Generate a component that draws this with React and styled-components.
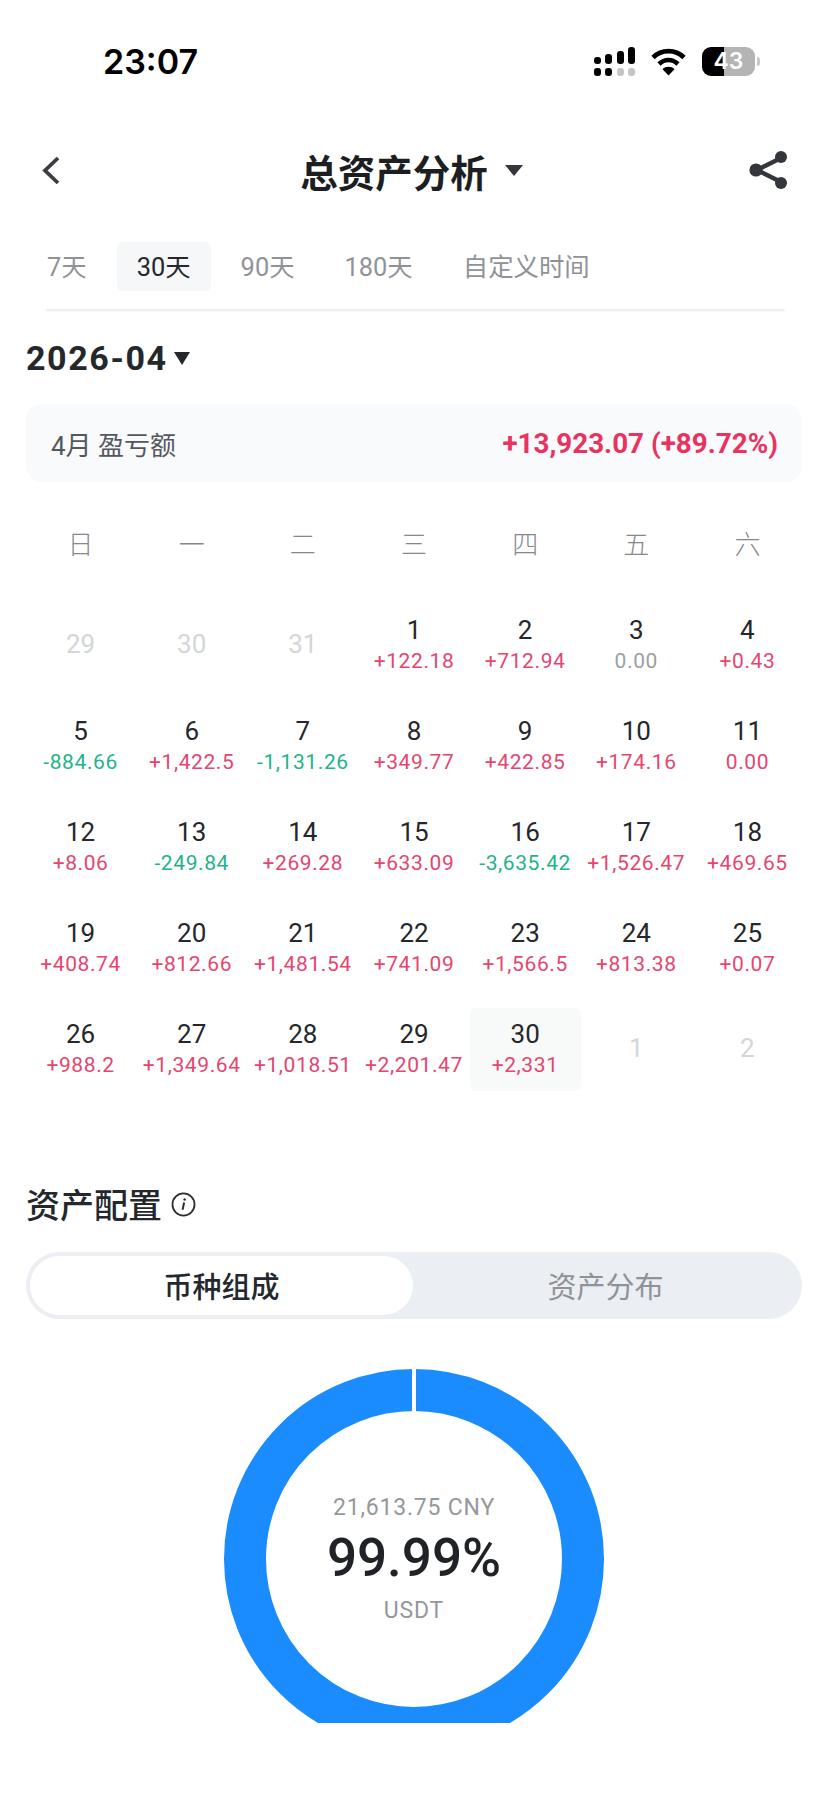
import React from 'react';
import styled, { createGlobalStyle } from 'styled-components';

const GlobalStyle = createGlobalStyle`
  html, body {
    margin: 0;
    padding: 0;
    background: #fff;
    font-family: Roboto, "Noto Sans CJK SC", sans-serif;
    color: #24272c;
  }
`;

const TABS = ['7天', '30天', '90天', '180天', '自定义时间'];
const WEEK = ['日', '一', '二', '三', '四', '五', '六'];

// tone: up / down / flat
const DAYS = [
  { day: 29, faded: true }, { day: 30, faded: true }, { day: 31, faded: true },
  { day: 1, value: '+122.18', tone: 'up' }, { day: 2, value: '+712.94', tone: 'up' },
  { day: 3, value: '0.00', tone: 'flat' }, { day: 4, value: '+0.43', tone: 'up' },
  { day: 5, value: '-884.66', tone: 'down' }, { day: 6, value: '+1,422.5', tone: 'up' },
  { day: 7, value: '-1,131.26', tone: 'down' }, { day: 8, value: '+349.77', tone: 'up' },
  { day: 9, value: '+422.85', tone: 'up' }, { day: 10, value: '+174.16', tone: 'up' },
  { day: 11, value: '0.00', tone: 'up' },
  { day: 12, value: '+8.06', tone: 'up' }, { day: 13, value: '-249.84', tone: 'down' },
  { day: 14, value: '+269.28', tone: 'up' }, { day: 15, value: '+633.09', tone: 'up' },
  { day: 16, value: '-3,635.42', tone: 'down' }, { day: 17, value: '+1,526.47', tone: 'up' },
  { day: 18, value: '+469.65', tone: 'up' },
  { day: 19, value: '+408.74', tone: 'up' }, { day: 20, value: '+812.66', tone: 'up' },
  { day: 21, value: '+1,481.54', tone: 'up' }, { day: 22, value: '+741.09', tone: 'up' },
  { day: 23, value: '+1,566.5', tone: 'up' }, { day: 24, value: '+813.38', tone: 'up' },
  { day: 25, value: '+0.07', tone: 'up' },
  { day: 26, value: '+988.2', tone: 'up' }, { day: 27, value: '+1,349.64', tone: 'up' },
  { day: 28, value: '+1,018.51', tone: 'up' }, { day: 29, value: '+2,201.47', tone: 'up' },
  { day: 30, value: '+2,331', tone: 'up', today: true },
  { day: 1, faded: true }, { day: 2, faded: true },
];

const TONES = { up: '#e5456f', down: '#23b38a', flat: '#9a9fa5' };

const SignalIcon = () => (
  <svg width="42" height="29" viewBox="0 0 42 29" fill="#000">
    <rect x="1" y="10" width="7" height="7" rx="3" />
    <rect x="12" y="7" width="7" height="10" rx="3" />
    <rect x="24" y="4" width="7" height="13" rx="3" />
    <rect x="35" y="0" width="7" height="17" rx="3" />
    <rect x="1" y="21" width="7" height="8" rx="3" />
    <rect x="12" y="21" width="7" height="8" rx="3" />
    <rect x="24" y="21" width="7" height="8" rx="3" fill="#c4c4c4" />
    <rect x="35" y="21" width="7" height="8" rx="3" fill="#c4c4c4" />
  </svg>
);

const WifiIcon = () => (
  <svg width="35" height="28" viewBox="0 0 35 28" fill="none" stroke="#000" strokeWidth="4.6">
    <path d="M2 9.5C10.5 1 24.5 1 33 9.5" />
    <path d="M8 16C13.5 10.6 21.5 10.6 27 16" />
    <path d="M17.5 27.5L11.5 21.2C14.8 18 20.2 18 23.5 21.2Z" fill="#000" stroke="none" />
  </svg>
);

const ShareIcon = () => (
  <svg width="40" height="40" viewBox="0 0 40 40" fill="#33363a" stroke="#33363a">
    <path d="M32 8L8 20L32 32" fill="none" strokeWidth="4.4" />
    <circle cx="32" cy="7" r="6" stroke="none" />
    <circle cx="7" cy="20" r="6.6" stroke="none" />
    <circle cx="32" cy="33" r="6" stroke="none" />
  </svg>
);

const InfoIcon = styled(({ className }) => (
  <svg className={className} width="25" height="25" viewBox="0 0 24 24" fill="none" stroke="#2c2f33" strokeWidth="1.7">
    <circle cx="12" cy="12" r="10.6" />
    <path d="M12.6 10.1L11.1 17.1" strokeWidth="1.9" />
    <circle cx="13.1" cy="7.1" r="1.2" fill="#2c2f33" stroke="none" />
  </svg>
))`
  margin-top: 2px;
`;

const App = () => (
  <Page>
    <GlobalStyle />
    <StatusBar>
      <Clock>23:07</Clock>
      <StatusIcons>
        <SignalIcon />
        <WifiIcon />
        <Battery>
          <BatteryBody>43</BatteryBody>
          <BatteryNub />
        </Battery>
      </StatusIcons>
    </StatusBar>

    <NavBar>
      <BackButton>
        <svg width="18" height="29" viewBox="0 0 18 29" fill="none" stroke="#3a3d41" strokeWidth="3.8">
          <path d="M16 2L3 14.5L16 27" />
        </svg>
      </BackButton>
      <NavTitle>
        总资产分析
        <Caret $w={9} $h={11} $color="#33363a" />
      </NavTitle>
      <ShareButton>
        <ShareIcon />
      </ShareButton>
    </NavBar>

    <Tabs>
      {TABS.map((tab) => (
        <Tab key={tab} $active={tab === '30天'}>{tab}</Tab>
      ))}
    </Tabs>
    <Divider />

    <MonthRow>
      <MonthLabel>2026-04</MonthLabel>
      <Caret $w={8.5} $h={13} $color="#24272c" />
    </MonthRow>

    <SummaryCard>
      <SummaryLabel>4月 盈亏额</SummaryLabel>
      <SummaryValue>+13,923.07 (+89.72%)</SummaryValue>
    </SummaryCard>

    <WeekRow>
      {WEEK.map((w) => (
        <WeekDay key={w}>{w}</WeekDay>
      ))}
    </WeekRow>

    <DayGrid>
      {DAYS.map((d, i) => (
        <DayCell key={i} $today={d.today}>
          <DayNumber $faded={d.faded}>{d.day}</DayNumber>
          {d.value && <DayValue $tone={d.tone}>{d.value}</DayValue>}
        </DayCell>
      ))}
    </DayGrid>

    <SectionTitle>
      资产配置
      <InfoIcon />
    </SectionTitle>

    <Segment>
      <SegmentItem $active>币种组成</SegmentItem>
      <SegmentItem>资产分布</SegmentItem>
    </Segment>

    <DonutClip>
      <Donut>
        <svg width="380" height="380" viewBox="0 0 380 380" fill="none">
          <circle cx="190" cy="190" r="169" stroke="#1b8cfd" strokeWidth="42" />
          <path d="M190 0V44" stroke="#fff" strokeWidth="4" />
        </svg>
        <DonutCenter>
          <DonutAmount>21,613.75 CNY</DonutAmount>
          <DonutPercent>99.99%</DonutPercent>
          <DonutCoin>USDT</DonutCoin>
        </DonutCenter>
      </Donut>
    </DonutClip>
  </Page>
);

export default App;

const Page = styled.div`
  width: 828px;
  height: 1796px;
  overflow: hidden;
  background: #fff;
`;

const StatusBar = styled.div`
  display: flex;
  align-items: center;
  justify-content: space-between;
  height: 29px;
  padding: 47px 68px 0 103px;
`;

const Clock = styled.span`
  font-family: Inter, sans-serif;
  font-size: 34px;
  font-weight: 600;
  color: #000;
  line-height: 29px;
`;

const StatusIcons = styled.div`
  display: flex;
  align-items: center;
  gap: 16px;
`;

const Battery = styled.div`
  display: flex;
  align-items: center;
  gap: 2px;
`;

const BatteryBody = styled.div`
  width: 53px;
  height: 29px;
  border-radius: 9px;
  background: linear-gradient(90deg, #000 42%, #b4b4b4 42%);
  color: #fff;
  font-family: Inter, sans-serif;
  font-size: 23px;
  font-weight: 600;
  line-height: 29px;
  text-align: center;
`;

const BatteryNub = styled.div`
  width: 3px;
  height: 9px;
  border-radius: 0 3px 3px 0;
  background: #c8c8c8;
`;

const NavBar = styled.div`
  display: grid;
  grid-template-columns: 1fr auto 1fr;
  align-items: center;
  height: 60px;
  margin-top: 64px;
  padding: 0 41px 0 36px;
`;

const BackButton = styled.div`
  display: flex;
  margin-left: 6px;
`;

const ShareButton = styled.div`
  display: flex;
  justify-content: flex-end;
  margin-right: -2px;
`;

const NavTitle = styled.div`
  display: flex;
  align-items: center;
  gap: 17px;
  font-size: 37.5px;
  font-weight: 600;
  color: #1c1e21;
`;

const Caret = styled.span`
  display: inline-block;
  width: 0;
  height: 0;
  border-left: ${(p) => p.$w}px solid transparent;
  border-right: ${(p) => p.$w}px solid transparent;
  border-top: ${(p) => p.$h}px solid ${(p) => p.$color};
`;

const Tabs = styled.div`
  display: flex;
  gap: 10px;
  height: 49px;
  margin-top: 42px;
  padding-left: 27px;
`;

const Tab = styled.div`
  display: flex;
  align-items: center;
  padding: 0 20px 4px;
  border-radius: 6px;
  font-size: 25.4px;
  color: ${(p) => (p.$active ? '#24272c' : '#8f9398')};
  background: ${(p) => (p.$active ? '#f5f7f9' : 'transparent')};
`;

const Divider = styled.div`
  height: 2px;
  margin: 18px 43px 0 46px;
  border-radius: 0 0 6px 6px;
  background: #eceef0;
  box-shadow: 0 1px 2px rgba(0, 0, 0, 0.04);
`;

const MonthRow = styled.div`
  display: flex;
  align-items: center;
  gap: 6px;
  height: 40px;
  margin-top: 27px;
  padding-left: 26px;
`;

const MonthLabel = styled.span`
  font-size: 34px;
  font-weight: 700;
  letter-spacing: 1.6px;
  color: #24272c;
`;

const SummaryCard = styled.div`
  display: flex;
  align-items: center;
  justify-content: space-between;
  height: 78px;
  margin: 26px 26px 0;
  padding: 0 24px 0 25px;
  border-radius: 16px;
  background: #f9fafb;
`;

const SummaryLabel = styled.span`
  font-size: 26px;
  color: #54585e;
`;

const SummaryValue = styled.span`
  font-size: 27.8px;
  font-weight: 700;
  color: #e8325f;
`;

const WeekRow = styled.div`
  display: grid;
  grid-template-columns: repeat(7, 1fr);
  height: 40px;
  margin-top: 40px;
  padding: 0 25px;
`;

const WeekDay = styled.div`
  display: flex;
  align-items: center;
  justify-content: center;
  font-size: 26px;
  font-weight: 300;
  color: #85898e;
`;

const DayGrid = styled.div`
  display: grid;
  grid-template-columns: repeat(7, 1fr);
  grid-auto-rows: 83px;
  row-gap: 18px;
  margin-top: 42px;
  padding: 0 25px;
`;

const DayCell = styled.div`
  display: flex;
  flex-direction: column;
  align-items: center;
  justify-content: center;
  padding-bottom: 3px;
  box-sizing: border-box;
  border-radius: 6px;
  background: ${(p) => (p.$today ? '#f8f9f9' : 'transparent')};
`;

const DayNumber = styled.div`
  font-size: 26px;
  line-height: 34px;
  color: ${(p) => (p.$faded ? '#d3d6d9' : '#24272c')};
`;

const DayValue = styled.div`
  font-size: 21px;
  line-height: 29px;
  letter-spacing: 0.6px;
  white-space: nowrap;
  color: ${(p) => TONES[p.$tone]};
`;

const SectionTitle = styled.div`
  display: flex;
  align-items: center;
  gap: 9px;
  height: 44px;
  margin-top: 90px;
  padding-left: 26px;
  font-size: 34px;
  font-weight: 500;
  color: #24272c;
`;

const Segment = styled.div`
  display: grid;
  grid-template-columns: 383px 1fr;
  height: 67px;
  margin: 27px 26px 0;
  padding: 4px;
  box-sizing: border-box;
  border-radius: 34px;
  background: #ebeef3;
`;

const SegmentItem = styled.div`
  display: flex;
  align-items: center;
  justify-content: center;
  padding-bottom: 1px;
  border-radius: 30px;
  font-size: 29px;
  font-weight: ${(p) => (p.$active ? 500 : 400)};
  color: ${(p) => (p.$active ? '#24272c' : '#8f9398')};
  background: ${(p) => (p.$active ? '#fff' : 'transparent')};
`;

const DonutClip = styled.div`
  display: flex;
  justify-content: center;
  height: 354px;
  margin-top: 50px;
  overflow: hidden;
`;

const Donut = styled.div`
  position: relative;
  width: 380px;
  height: 380px;
  flex: none;
`;

const DonutCenter = styled.div`
  position: absolute;
  inset: 0;
  display: flex;
  flex-direction: column;
  align-items: center;
  justify-content: center;
  padding-top: 4px;
  box-sizing: border-box;
`;

const DonutAmount = styled.div`
  font-size: 23px;
  line-height: 30px;
  letter-spacing: 0.8px;
  color: #94989d;
`;

const DonutPercent = styled.div`
  font-size: 53px;
  font-weight: 500;
  line-height: 70px;
  color: #1f2226;
`;

const DonutCoin = styled.div`
  font-size: 23px;
  line-height: 36px;
  letter-spacing: 0.8px;
  color: #94989d;
`;
